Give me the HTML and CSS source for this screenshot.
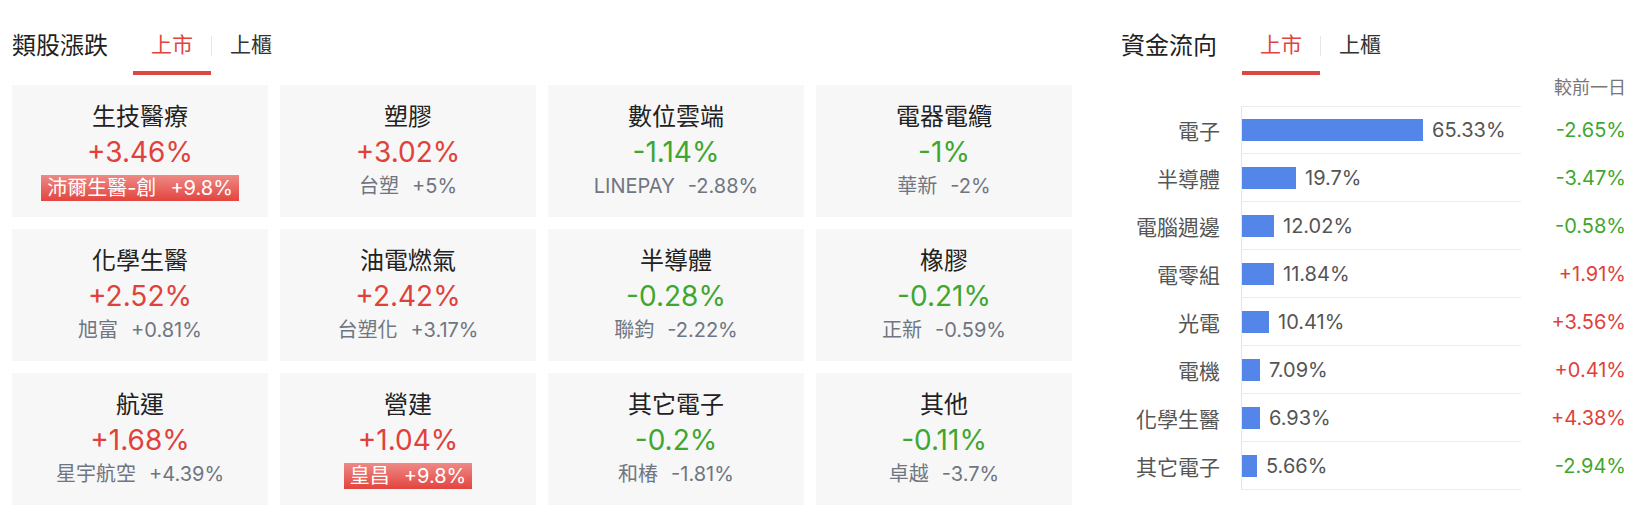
FILE: index.html
```html
<!DOCTYPE html>
<html lang="zh-Hant">
  <head>
    <meta charset="UTF-8" />
    <meta name="viewport" content="width=device-width, initial-scale=1.0" />
    <title>類股漲跌 / 資金流向</title>
    <link rel="stylesheet" href="styles.css">
  </head>
  <body>
    <div class="page">
      <!-- Sector movers -->
      <section class="sectors">
        <div class="panel-head">
          <h2 class="panel-title">類股漲跌</h2>
          <div class="tabs">
            <span class="tab active">上市</span>
            <span class="tab-sep"></span>
            <span class="tab">上櫃</span>
          </div>
        </div>

        <div class="sector-grid">
          <div class="sector-card">
            <div class="sector-name">生技醫療</div>
            <div class="sector-pct up">+3.46%</div>
            <div class="sector-lead"><span class="limit">沛爾生醫-創<span>+9.8%</span></span></div>
          </div>
          <div class="sector-card">
            <div class="sector-name">塑膠</div>
            <div class="sector-pct up">+3.02%</div>
            <div class="sector-lead">台塑<span>+5%</span></div>
          </div>
          <div class="sector-card">
            <div class="sector-name">數位雲端</div>
            <div class="sector-pct down">-1.14%</div>
            <div class="sector-lead">LINEPAY<span>-2.88%</span></div>
          </div>
          <div class="sector-card">
            <div class="sector-name">電器電纜</div>
            <div class="sector-pct down">-1%</div>
            <div class="sector-lead">華新<span>-2%</span></div>
          </div>

          <div class="sector-card">
            <div class="sector-name">化學生醫</div>
            <div class="sector-pct up">+2.52%</div>
            <div class="sector-lead">旭富<span>+0.81%</span></div>
          </div>
          <div class="sector-card">
            <div class="sector-name">油電燃氣</div>
            <div class="sector-pct up">+2.42%</div>
            <div class="sector-lead">台塑化<span>+3.17%</span></div>
          </div>
          <div class="sector-card">
            <div class="sector-name">半導體</div>
            <div class="sector-pct down">-0.28%</div>
            <div class="sector-lead">聯鈞<span>-2.22%</span></div>
          </div>
          <div class="sector-card">
            <div class="sector-name">橡膠</div>
            <div class="sector-pct down">-0.21%</div>
            <div class="sector-lead">正新<span>-0.59%</span></div>
          </div>

          <div class="sector-card">
            <div class="sector-name">航運</div>
            <div class="sector-pct up">+1.68%</div>
            <div class="sector-lead">星宇航空<span>+4.39%</span></div>
          </div>
          <div class="sector-card">
            <div class="sector-name">營建</div>
            <div class="sector-pct up">+1.04%</div>
            <div class="sector-lead"><span class="limit">皇昌<span>+9.8%</span></span></div>
          </div>
          <div class="sector-card">
            <div class="sector-name">其它電子</div>
            <div class="sector-pct down">-0.2%</div>
            <div class="sector-lead">和椿<span>-1.81%</span></div>
          </div>
          <div class="sector-card">
            <div class="sector-name">其他</div>
            <div class="sector-pct down">-0.11%</div>
            <div class="sector-lead">卓越<span>-3.7%</span></div>
          </div>
        </div>
      </section>

      <!-- Money flow by sector -->
      <section class="flow">
        <div class="panel-head">
          <h2 class="panel-title">資金流向</h2>
          <div class="tabs">
            <span class="tab active">上市</span>
            <span class="tab-sep"></span>
            <span class="tab">上櫃</span>
          </div>
        </div>

        <div class="flow-note">較前一日</div>

        <div class="flow-chart">
          <div class="flow-row">
            <div class="flow-label">電子</div>
            <div class="flow-plot"><span class="bar" style="width: 181px"></span><span class="bar-value">65.33%</span></div>
            <div class="flow-change down">-2.65%</div>
          </div>
          <div class="flow-row">
            <div class="flow-label">半導體</div>
            <div class="flow-plot"><span class="bar" style="width: 54px"></span><span class="bar-value">19.7%</span></div>
            <div class="flow-change down">-3.47%</div>
          </div>
          <div class="flow-row">
            <div class="flow-label">電腦週邊</div>
            <div class="flow-plot"><span class="bar" style="width: 32px"></span><span class="bar-value">12.02%</span></div>
            <div class="flow-change down">-0.58%</div>
          </div>
          <div class="flow-row">
            <div class="flow-label">電零組</div>
            <div class="flow-plot"><span class="bar" style="width: 32px"></span><span class="bar-value">11.84%</span></div>
            <div class="flow-change up">+1.91%</div>
          </div>
          <div class="flow-row">
            <div class="flow-label">光電</div>
            <div class="flow-plot"><span class="bar" style="width: 27px"></span><span class="bar-value">10.41%</span></div>
            <div class="flow-change up">+3.56%</div>
          </div>
          <div class="flow-row">
            <div class="flow-label">電機</div>
            <div class="flow-plot"><span class="bar" style="width: 18px"></span><span class="bar-value">7.09%</span></div>
            <div class="flow-change up">+0.41%</div>
          </div>
          <div class="flow-row">
            <div class="flow-label">化學生醫</div>
            <div class="flow-plot"><span class="bar" style="width: 18px"></span><span class="bar-value">6.93%</span></div>
            <div class="flow-change up">+4.38%</div>
          </div>
          <div class="flow-row">
            <div class="flow-label">其它電子</div>
            <div class="flow-plot"><span class="bar" style="width: 15px"></span><span class="bar-value">5.66%</span></div>
            <div class="flow-change down">-2.94%</div>
          </div>
        </div>
      </section>
    </div>
  </body>
</html>
```

FILE: styles.css
```css
* {
  margin: 0;
  padding: 0;
  box-sizing: border-box;
}

body {
  background-color: #fff;
  color: #222;
  font-family: Inter, "Noto Sans CJK TC", sans-serif;
}

.page {
  display: flex;
  gap: 49px;
  padding: 0 18px 0 12px;
}

/* shared header: title + market tabs */
.panel-head {
  display: flex;
  align-items: flex-start;
  height: 75px;
}

.panel-title {
  font-size: 24px;
  font-weight: 400;
  line-height: 30px;
  padding-top: 31px;
  margin-right: 25px;
  color: #222;
}

.tabs {
  display: flex;
  align-items: flex-start;
  padding-top: 30px;
}

.tab {
  width: 78px;
  font-size: 21px;
  line-height: 30px;
  text-align: center;
  color: #333;
  padding-bottom: 11px;
  border-bottom: 4px solid transparent;
}

.tab.active {
  color: #e0443e;
  border-bottom-color: #dc4841;
}

.tab-sep {
  width: 1px;
  height: 20px;
  margin-top: 6px;
  background-color: #e6e6e6;
}

.up {
  color: #e0423b;
}

.down {
  color: #3fa72f;
}

/* sector cards */
.sectors {
  width: 1060px;
}

.sector-grid {
  display: grid;
  grid-template-columns: repeat(4, 256px);
  grid-auto-rows: 132px;
  gap: 12px;
  margin-top: 10px;
}

.sector-card {
  background-color: #f7f7f7;
  text-align: center;
  padding-top: 15px;
}

.sector-name {
  font-size: 24px;
  line-height: 34px;
  color: #222;
}

.sector-pct {
  font-size: 28px;
  line-height: 36px;
}

.sector-lead {
  font-size: 20px;
  line-height: 32px;
  color: #6f7681;
}

.sector-lead span {
  margin-left: 13px;
}

.sector-lead .limit {
  display: inline-block;
  margin-left: 0;
  padding: 0 6px;
  line-height: 26px;
  vertical-align: middle;
  color: #fff;
  background: linear-gradient(#ee8a86, #e3443e);
}

.sector-lead .limit span {
  margin-left: 14px;
}

/* money flow chart */
.flow {
  width: 505px;
}

.flow-note {
  font-size: 18px;
  line-height: 26px;
  text-align: right;
  color: #777;
  margin-bottom: 5px;
}

.flow-row {
  display: grid;
  grid-template-columns: 99px 280px 1fr;
  column-gap: 21px;
  height: 48px;
}

.flow-label {
  align-self: center;
  text-align: right;
  font-size: 21px;
  color: #555;
}

.flow-plot {
  display: flex;
  align-items: center;
  border-left: 1px solid #e4e4e4;
  border-bottom: 1px solid #ededed;
}

.flow-row:first-child .flow-plot {
  border-top: 1px solid #ededed;
}

.bar {
  height: 22px;
  background-color: #5486ea;
}

.bar-value {
  margin-left: 9px;
  font-size: 20px;
  color: #555;
}

.flow-change {
  align-self: center;
  text-align: right;
  font-size: 20px;
}
```
